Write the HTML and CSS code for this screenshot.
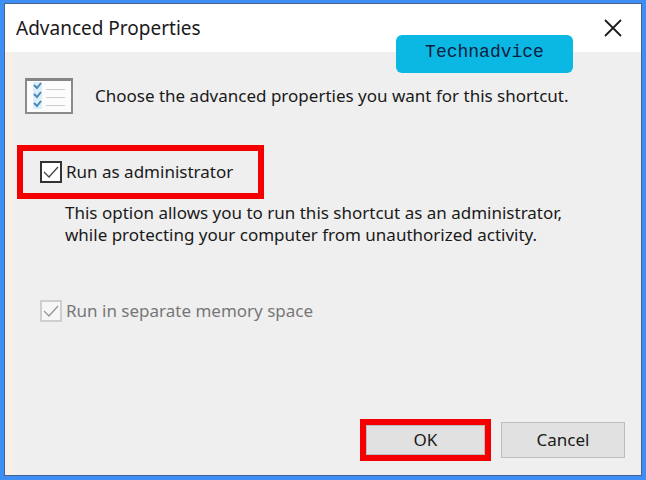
FILE: index.html
```html
<!DOCTYPE html>
<html lang="en">
<head>
<meta charset="utf-8">
<title>Advanced Properties</title>
<link rel="stylesheet" href="styles.css">
</head>
<body>
<main class="dialog" role="dialog" aria-labelledby="title">
  <header class="titlebar">
    <h1 class="title" id="title">Advanced Properties</h1>
    <button class="close" type="button" aria-label="Close">
      <svg width="18" height="18" viewBox="0 0 18 18" fill="none" stroke="#1c1c1c" stroke-width="1.8"><path d="M1 1l16 16M17 1L1 17"/></svg>
    </button>
  </header>
  <div class="brand">Technadvice</div>
  <form class="content">
    <div class="intro">
      <svg class="list-icon" width="48" height="36" viewBox="0 0 48 36" fill="none">
        <path fill="#fcfcfc" stroke="#8b8b8b" stroke-width="2" d="M1 1h46v34H1z"/>
        <path stroke="#858585" stroke-width="3" d="M0 1.5h48"/>
        <path fill="#d9effb" d="M8 4h9v27H8z"/>
        <path stroke="#4f87b0" stroke-width="2" d="M9 7l3 3 4-5M9 16l3 3 4-5M9 25l3 3 4-5"/>
        <path stroke="#cfcfcf" stroke-width="1" d="M21 11.500h19M21 19.500h19M21 27.500h19"/>
      </svg>
      <p class="text">Choose the advanced properties you want for this shortcut.</p>
    </div>
    <div class="highlight option">
      <input class="check" type="checkbox" id="admin" checked>
      <label for="admin">Run as administrator</label>
    </div>
    <p class="text note">This option allows you to run this shortcut as an administrator,<br>while protecting your computer from unauthorized activity.</p>
    <div class="option separate">
      <input class="check" type="checkbox" id="memory" checked disabled>
      <label for="memory">Run in separate memory space</label>
    </div>
    <footer class="actions">
      <div class="ok-frame"><button class="button" type="button">OK</button></div>
      <button class="button cancel" type="button">Cancel</button>
    </footer>
  </form>
</main>
</body>
</html>
```
FILE: styles.css
```css
* { box-sizing: border-box; }
body {
  margin: 0;
  min-height: 100vh;
  display: flex;
  padding: 3px 4px 4px;
  background: #3d8ff5;
  color: #1a1a1a;
  font-family: "Noto Sans", "Open Sans", sans-serif;
  font-size: 17px;
  line-height: 22px;
}
h1, p { margin: 0; }
.dialog {
  position: relative;
  flex: 1;
  display: flex;
  flex-direction: column;
  border: 1px solid #48628f;
  background: #efefef;
}
.titlebar {
  display: flex;
  align-items: center;
  justify-content: space-between;
  height: 48px;
  padding: 0 19px 0 11px;
  background: #fff;
}
.title { font-size: 19px; font-weight: 400; line-height: 26px; }
.close {
  display: flex;
  padding: 0;
  border: 0;
  background: none;
}
.brand {
  position: absolute;
  top: 31px;
  right: 68px;
  width: 177px;
  padding: 6px 0 10px;
  border-radius: 6px;
  background: #0bb8e4;
  color: #0b2040;
  font-family: "Courier New", "Liberation Mono", monospace;
  font-size: 18px;
  text-align: center;
}
.content {
  flex: 1;
  display: flex;
  flex-direction: column;
  align-items: flex-start;
  padding: 26px 16px 14px 12px;
  border-style: solid;
  border-width: 0 0 0 8px;
  border-image: linear-gradient(90deg, #f8efe8 50%, #e6f3fc 50%) 0 0 0 8;
}
.intro { display: flex; align-items: center; gap: 22px; }
.option { display: flex; align-items: center; gap: 4px; }
.highlight {
  width: 247px;
  height: 54px;
  margin: 31px 0 0 -8px;
  padding-left: 17px;
  border: 6px solid #f50000;
}
.check {
  appearance: none;
  width: 22px;
  height: 22px;
  margin: 0;
  border: 2px solid #333;
  background: #fff url("data:image/svg+xml,%3Csvg xmlns='http://www.w3.org/2000/svg' viewBox='0 0 18 18' fill='none' stroke='%23444' stroke-width='1.3'%3E%3Cpath d='M2 9l5 5 9-10'/%3E%3C/svg%3E") center / 18px no-repeat;
}
.check:disabled { border: 2px solid #b0b0b0; opacity: 0.5; }
.check:disabled + label { color: #777; }
.note { margin: 3px 0 0 40px; }
.separate { margin: 54px 0 0 15px; }
.actions {
  display: flex;
  align-items: center;
  align-self: flex-end;
  gap: 10px;
  margin-top: auto;
}
.button {
  width: 124px;
  height: 36px;
  border: 1px solid #bdbdbd;
  background: #e1e1e1;
  color: #1a1a1a;
  font: inherit;
}
.ok-frame { display: flex; width: 131px; border: 6px solid #f50000; }
.ok-frame .button { flex: 1; height: 30px; }
```
